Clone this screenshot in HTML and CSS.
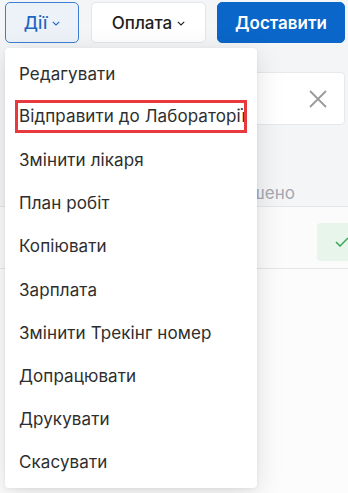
FILE: index.html
```html
<!DOCTYPE html>
<html lang="uk">
<head>
<meta charset="utf-8">
<link rel="stylesheet" href="styles.css">
</head>
<body>
<div class="page">
  <div class="toolbar">
    <button class="btn btn-actions">Дії <svg class="chev" width="8" height="5" viewBox="0 0 8 5"><path d="M0.8 0.8 L4 4 L7.2 0.8" fill="none" stroke="currentColor" stroke-width="1.1"/></svg></button>
    <button class="btn btn-pay">Оплата <svg class="chev" width="8" height="5" viewBox="0 0 8 5"><path d="M0.8 0.8 L4 4 L7.2 0.8" fill="none" stroke="currentColor" stroke-width="1.1"/></svg></button>
    <button class="btn btn-deliver">Доставити</button>
  </div>
  <div class="search">
    <svg class="close" width="20" height="20" viewBox="0 0 20 20"><path d="M2 2 L18 18 M18 2 L2 18" stroke="#9a9a9a" stroke-width="1.8" fill="none"/></svg>
  </div>
  <div class="table">
    <div class="thead"><span class="th">Завершено</span></div>
    <div class="trow"><span class="badge"><svg width="14" height="10" viewBox="0 0 14 10"><path d="M1 5 L5 9 L13 1" fill="none" stroke="#3aa757" stroke-width="1.5"/></svg></span></div>
  </div>
  <div class="rest"></div>

  <ul class="menu">
    <li class="item">Редагувати</li>
    <li class="item"><span class="mark">Відправити до Лабораторії</span></li>
    <li class="item">Змінити лікаря</li>
    <li class="item">План робіт</li>
    <li class="item">Копіювати</li>
    <li class="item">Зарплата</li>
    <li class="item">Змінити Трекінг номер</li>
    <li class="item">Допрацювати</li>
    <li class="item">Друкувати</li>
    <li class="item">Скасувати</li>
  </ul>
</div>
</body>
</html>
```

FILE: styles.css
```css
* { box-sizing: border-box; }
html, body { margin: 0; padding: 0; }
body {
  font-family: Inter, "Noto Sans", "Liberation Sans", sans-serif;
  background: #f4f5f7;
  width: 348px;
  height: 493px;
  overflow: hidden;
}
.page {
  position: relative;
  height: 493px;
  display: flex;
  flex-direction: column;
}
.toolbar {
  display: flex;
  gap: 12px;
  padding: 2px 3px 0 5px;
  height: 43px;
}
.btn {
  font-family: inherit;
  height: 41px;
  border-radius: 5px;
  font-size: 17px;
  font-weight: 500;
  display: flex;
  align-items: center;
  justify-content: center;
  gap: 5px;
  padding: 0;
  cursor: pointer;
}
.btn-actions {
  width: 74px;
  background: #edf2f9;
  border: 1px solid #3d7fd6;
  color: #1f65c2;
}
.btn-pay {
  width: 115px;
  background: #ffffff;
  border: 1px solid #e3e5e9;
  color: #1e1e1e;
}
.btn-deliver {
  width: 128px;
  margin-left: -1px;
  background: #0a66c8;
  border: 1px solid #0a66c8;
  color: #ffffff;
  font-weight: 600;
}
.chev { margin-top: 2px; }
.search {
  margin: 29px 3px 0 5px;
  height: 53px;
  background: #ffffff;
  border: 1px solid #e6e8eb;
  border-radius: 4px;
  display: flex;
  align-items: center;
  justify-content: flex-end;
  padding-right: 16px;
}
.table {
  margin-top: 7px;
  display: flex;
  flex-direction: column;
}
.thead {
  height: 75px;
  display: flex;
  align-items: flex-end;
  justify-content: flex-end;
  padding: 0 53px 3px 0;
  border-bottom: 1px solid #e4e6e9;
}
.th {
  color: #a4a8b0;
  font-size: 17px;
}
.trow {
  height: 62px;
  background: #fbfbfc;
  border-bottom: 1px solid #e4e6e9;
  display: flex;
  justify-content: flex-end;
  padding-top: 16px;
}
.badge {
  width: 40px;
  height: 38px;
  margin-right: -9px;
  background: #e7f5eb;
  border-radius: 4px;
  display: flex;
  align-items: center;
  padding-left: 18px;
}
.rest {
  flex: 1;
  background: #fcfcfc;
}
.menu {
  position: absolute;
  left: 5px;
  top: 48px;
  width: 252px;
  margin: 0;
  padding: 4px 0;
  list-style: none;
  background: #ffffff;
  border-radius: 4px;
  box-shadow: 0 6px 28px rgba(0, 0, 0, 0.12), 0 1px 4px rgba(0, 0, 0, 0.06);
}
.item {
  height: 43.2px;
  display: flex;
  align-items: center;
  padding-left: 14px;
  font-size: 17px;
  letter-spacing: 0.1px;
  color: #2e2e2e;
  white-space: nowrap;
}
.mark {
  display: inline-block;
  border: 3px solid #e8393f;
  line-height: 27px;
  padding: 0 1px;
  margin-left: -4px;
  width: 232px;
  overflow: hidden;
}
```
